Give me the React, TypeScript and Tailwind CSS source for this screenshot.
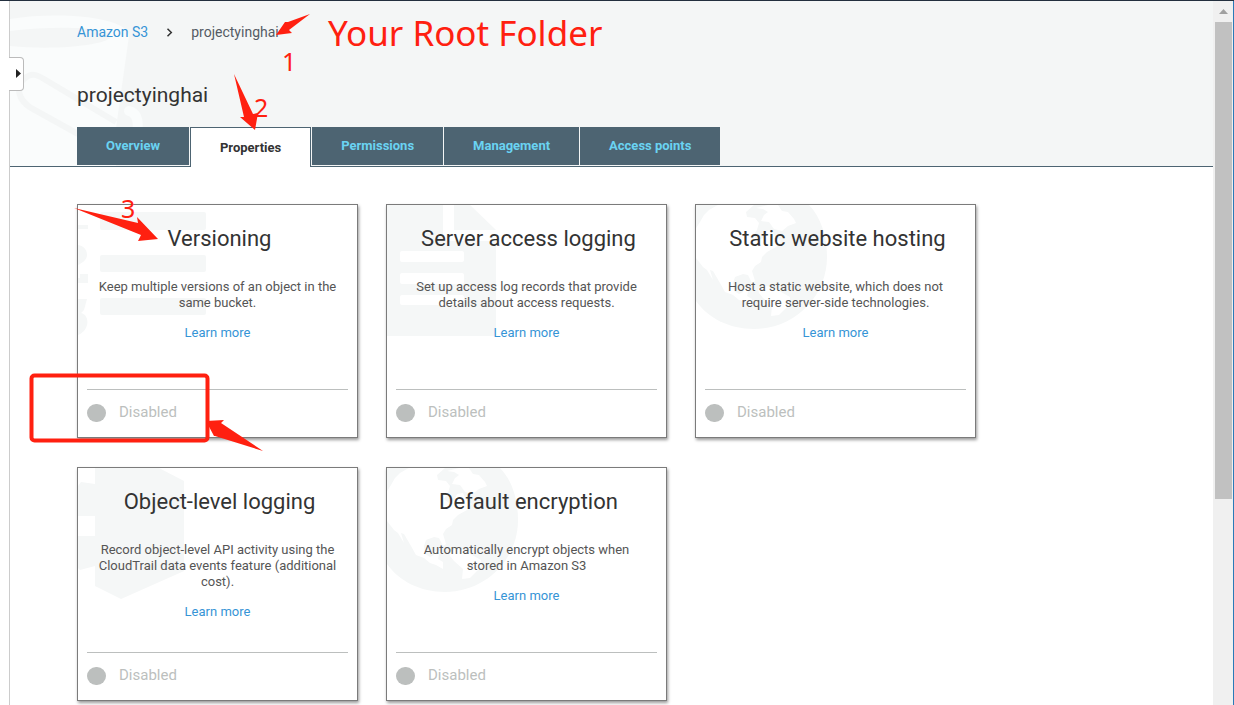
import type { ReactNode } from "react";

type Watermark = "list" | "document" | "globe" | "cube";

interface Property {
  title: string;
  description: string;
  watermark: Watermark;
}

const tabs = ["Overview", "Properties", "Permissions", "Management", "Access points"];

const properties: Property[] = [
  { title: "Versioning", description: "Keep multiple versions of an object in the same bucket.", watermark: "list" },
  { title: "Server access logging", description: "Set up access log records that provide details about access requests.", watermark: "document" },
  { title: "Static website hosting", description: "Host a static website, which does not require server-side technologies.", watermark: "globe" },
  { title: "Object-level logging", description: "Record object-level API activity using the CloudTrail data events feature (additional cost).", watermark: "cube" },
  { title: "Default encryption", description: "Automatically encrypt objects when stored in Amazon S3", watermark: "globe" },
];

const watermarks: Record<Watermark, ReactNode> = {
  list: (
    <>
      <rect x="22" y="7" width="106" height="18" rx="2" />
      <rect x="22" y="50" width="106" height="17" rx="2" />
      <rect x="22" y="93" width="106" height="17" rx="2" />
      <path d="M0 20h10v4H0zM0 40c6 1 9 5 9 10 0 5-5 8-9 10zM0 78v-5h2v-4h8v9zM0 94h9l-3 11-3 3c9 2 9 17-3 22z" />
    </>
  ),
  document: (
    <path
      fillRule="evenodd"
      d="M0 0h56v36h53v95H0zM67 0h16l26 25H67zM15 46h60q2 0 2 2v7q0 2-2 2H15q-2 0-2-2v-7q0-2 2-2zM15 68h60q2 0 2 2v7q0 2-2 2H15q-2 0-2-2v-7q0-2 2-2zM15 90h60q2 0 2 2v6q0 2-2 2H15q-2 0-2-2v-6q0-2 2-2z"
    />
  ),
  globe: (
    <>
      <path d="M0 0h113c12 12 18 32 18 52 0 40-33 72-73 72C33 124 12 113 0 96z" />
      <path
        fill="#fff"
        d="M4 17 8 10 13 5 20 1 22 0h36l-8 7 1 5 8 1 4 5-2 7-4 6 5 4 5-2 3-7 6-1 3 7 6 4-5 6-9 5-5 5-1 5-6 4-3 5 3 10-3 2-4-8-5-1-8 3-2 6 1 8 5 3 4-2 2-5 4 1-2 8 5 3 0 7-7-4-6-2-6-5-8-3-5-9-7-12-3-1 3 10-6-10-4-3-7-9-2-6 1-9-4-7z"
      />
      <path fill="#fff" d="M60 3 72 0h10l4 6 6 1 6 7 2 4-8 3-6 5-8-2-5-7-8-1 3-6 4-3-5-3z" />
      <path fill="#fff" d="M62 84l6-3 10 1 7 5 9 5 0 7-7 7-4 4-8 1 1-10-9-8-4-5z" />
    </>
  ),
  cube: <path d="M17 0h64l25 13v90l-63 28-26-13V98l-15 4-2-2V68h17V48H0V18l3-4 14 2z" />,
};

function PropertyCard({ title, description, watermark }: Property) {
  return (
    <section className="relative flex h-[234px] w-[281px] flex-col border border-[#7b7b7b] bg-white px-[9px] text-center shadow-[1px_2px_3px_rgba(0,0,0,0.4)]">
      <svg className="absolute top-0 left-0 h-[134px] w-[134px]" viewBox="0 0 134 134" fill="#f5f7f7" aria-hidden="true">
        {watermarks[watermark]}
      </svg>
      <div className="relative flex flex-1 flex-col">
        <h2 className="mt-4 pl-1 text-[22px] leading-9 whitespace-nowrap text-[#333]">{title}</h2>
        <p className="mt-[22px] px-[10px] text-[13px] leading-4 text-[#555]">{description}</p>
        <a href="#learn-more" className="mt-[14px] self-center text-[13px] leading-4 text-[#3694d6]">
          Learn more
        </a>
      </div>
      <div className="relative flex h-12 items-center gap-[13px] border-t border-[#bcbfbe] pb-[2px] text-[15px] text-[#bcbfbe]">
        <span className="h-[18px] w-[19px] rounded-full bg-[#bcbfbe]" />
        Disabled
      </div>
    </section>
  );
}

function BucketArt() {
  return (
    <svg className="absolute top-0 left-0 h-full w-[150px]" viewBox="0 0 150 165" preserveAspectRatio="xMinYMin meet" aria-hidden="true">
      <path fill="#fafcfc" d="M0 18c50-8 118-2 119 17l-13 92v38H0z" />
      <path fill="#f4f6f6" d="M0 30c50-6 101-3 101 5S50 50 0 45z" />
      <path fill="none" stroke="#f4f6f6" strokeWidth="6" d="M68 133 21 107C8 99 5 84 14 78c7-6 12-5 20 0l72 43" />
      <path fill="none" stroke="#fafcfc" strokeWidth="10" strokeLinecap="round" d="M119 110c8 2 10 10 8 22" />
    </svg>
  );
}

function Header() {
  return (
    <header className="relative border-b border-[#4d6472] bg-[#f4f6f6] pl-[67px]">
      <BucketArt />
      <div className="relative">
        <nav aria-label="Breadcrumb" className="flex items-center pt-[21px] text-sm leading-5 text-[#545b64]">
          <a href="#buckets" className="text-[#3694d6]">Amazon S3</a>
          <svg className="mx-[18px] h-[9px] w-[7px]" viewBox="0 0 7 9" fill="none" stroke="#333" strokeWidth="1.5" aria-hidden="true">
            <path d="M1.500 .8 5.300 4.500 1.500 8.200" />
          </svg>
          <span>projectyinghai</span>
        </nav>
        <h1 className="mt-[39px] text-[21px] leading-7 text-[#333]">projectyinghai</h1>
        <div role="tablist" className="mt-[18px] flex items-start gap-px text-[13px] font-bold">
          {tabs.map((tab) =>
            tab === "Properties" ? (
              <button key={tab} role="tab" aria-selected="true" className="-mb-px h-10 border border-b-0 border-[#4d6472] bg-white px-[29px] text-[#333]">
                {tab}
              </button>
            ) : (
              <button key={tab} role="tab" aria-selected="false" className="h-[38px] bg-[#4d6472] px-[29px] text-[#6ad3f2]">
                {tab}
              </button>
            ),
          )}
        </div>
      </div>
    </header>
  );
}

function Scrollbar() {
  return (
    <div className="flex w-[21px] shrink-0 flex-col items-center border-r border-[#2a7ab8] bg-[#f0f0f0]" aria-hidden="true">
      <svg className="my-2 h-[5px] w-[9px]" viewBox="0 0 9 5" fill="#a0a0a0">
        <path d="M4.500 0 9 5H0z" />
      </svg>
      <div className="h-[67.8%] w-[17px] bg-[#c1c1c1]" />
    </div>
  );
}

function Annotations() {
  return (
    <div className="pointer-events-none absolute inset-0 font-['Noto_Sans',sans-serif] text-[#ff2010]">
      <svg className="absolute top-0 left-0 h-[460px] w-[320px]" viewBox="0 1 320 460" fill="#ff2010" aria-hidden="true">
        <path d="M310 14 288 22 285 22 276 35 292 33 289 30z" />
        <path d="M234 74 244 117 240 117 255 130 258 113 253 114z" />
        <path d="M74 208 141 235 138 241 158 239 137 217 138 223z" />
        <path d="M263 451 215 436 214 436 206 421 224 420 221 423z" />
        <rect x="31.500" y="375.500" width="176" height="65" rx="3" fill="none" stroke="#ff2010" strokeWidth="4" />
      </svg>
      <span className="absolute top-2 left-[328px] text-[35px] leading-[48px] whitespace-nowrap">Your Root Folder</span>
      <span className="absolute top-11 left-[282px] text-[25px] leading-8">1</span>
      <span className="absolute top-[90px] left-[254px] text-[25px] leading-8">2</span>
      <span className="absolute top-[191px] left-[121px] text-[25px] leading-8">3</span>
    </div>
  );
}

export default function App() {
  return (
    <div className="relative flex h-screen overflow-hidden border-t border-[#232f3e] bg-white font-[Roboto,sans-serif]">
      <div className="relative ml-[9px] min-w-0 flex-1 border-l border-[#ccc]">
        <Header />
        <main className="flex flex-wrap gap-x-7 gap-y-[29px] pt-[37px] pl-[67px]">
          {properties.map((property) => (
            <PropertyCard key={property.title} {...property} />
          ))}
        </main>
        <button
          aria-label="Open navigation"
          className="absolute top-[56px] -left-px flex h-[34px] w-[15px] items-center justify-end rounded-r border border-l-0 border-[#bbb] bg-white pr-[2px] pb-[2px]"
        >
          <svg className="h-[9px] w-[5px]" viewBox="0 0 5 9" fill="#222" aria-hidden="true">
            <path d="M0 0 5 4.500 0 9z" />
          </svg>
        </button>
      </div>
      <Scrollbar />
      <Annotations />
    </div>
  );
}
